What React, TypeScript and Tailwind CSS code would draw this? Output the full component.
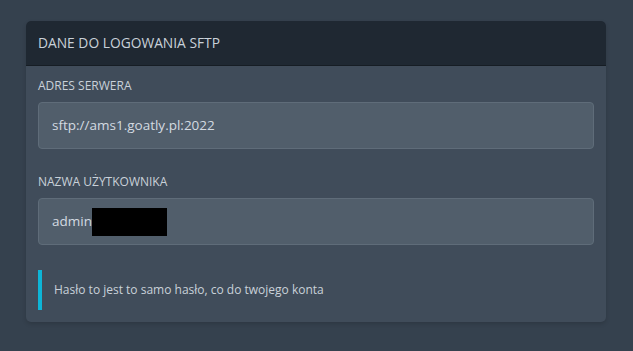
import React from 'react';

function Field({ label, children }: { label: string; children: React.ReactNode }) {
  return (
    <div className="flex flex-col">
      <label className="text-[12px] leading-[16px] text-[#c9d1d9] mb-[8px]">{label}</label>
      <div className="h-[47px] rounded-[4px] border border-[#5f6c79] bg-[#515e6b] px-[13px] flex items-center text-[13.5px] text-[#d3dae1]">
        {children}
      </div>
    </div>
  );
}

export default function App() {
  return (
    <div
      className="w-[633px] h-[351px] bg-[#35414e] pt-[21px] pl-[26px]"
      style={{ fontFamily: '"Open Sans", "Noto Sans", sans-serif' }}
    >
      <div className="w-[580px] h-[301px] rounded-[5px] bg-[#404c5a] overflow-hidden shadow-[0_2px_4px_rgba(0,0,0,0.15)]">
        <div className="h-[45px] bg-[#1f2832] border-b border-[#161d24] px-[12px] flex items-center text-[13.8px] text-[#c9d1d9]">
          DANE DO LOGOWANIA SFTP
        </div>
        <div className="px-[12px] pt-[12px] flex flex-col gap-[25px]">
          <Field label="ADRES SERWERA">sftp://ams1.goatly.pl:2022</Field>
          <Field label="NAZWA UŻYTKOWNIKA">
            <span>admin</span>
            <span className="inline-block w-[75px] h-[28px] bg-black" />
          </Field>
        </div>
        <div className="mx-[12px] mt-[25px] h-[40px] border-l-4 border-[#0db5d7] pl-[12px] flex items-center text-[12px] text-[#c9d1d9]">
          Hasło to jest to samo hasło, co do twojego konta
        </div>
      </div>
    </div>
  );
}
